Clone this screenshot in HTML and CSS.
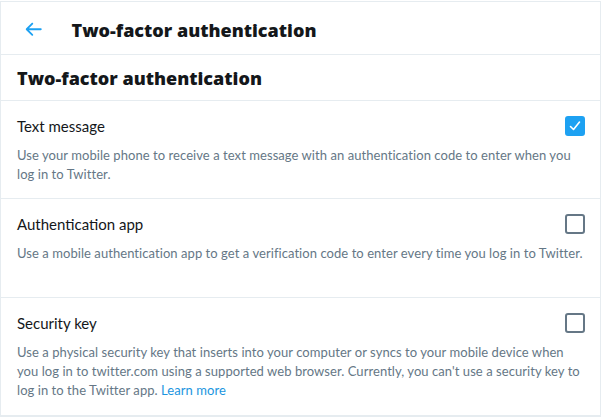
FILE: index.html
```html
<!DOCTYPE html>
<html>
<head>
<meta charset="utf-8">
<link rel="stylesheet" href="styles.css">
</head>
<body>
<div class="panel">
  <header class="topbar">
    <svg class="back" viewBox="0 0 24 24"><path d="M20 11H7.414l4.293-4.293c.39-.39.39-1.023 0-1.414s-1.023-.39-1.414 0l-6 6c-.39.39-.39 1.023 0 1.414l6 6c.195.195.45.293.707.293s.512-.098.707-.293c.39-.39.39-1.023 0-1.414L7.414 13H20c.553 0 1-.447 1-1s-.447-1-1-1z"/></svg>
    <h1 class="topbar-title">Two-factor authentication</h1>
  </header>
  <h2 class="section-title">Two-factor authentication</h2>
  <div class="option">
    <div class="option-head">
      <span class="option-label">Text message</span>
      <span class="check checked"><svg viewBox="0 0 20 20"><path d="M5.5 10.5l3 3 6-7.5"/></svg></span>
    </div>
    <p class="option-desc">Use your mobile phone to receive a text message with an authentication code to enter when you log in to Twitter.</p>
  </div>
  <div class="option tall">
    <div class="option-head">
      <span class="option-label">Authentication app</span>
      <span class="check"></span>
    </div>
    <p class="option-desc">Use a mobile authentication app to get a verification code to enter every time you log in to Twitter.</p>
  </div>
  <div class="option">
    <div class="option-head">
      <span class="option-label">Security key</span>
      <span class="check"></span>
    </div>
    <p class="option-desc">Use a physical security key that inserts into your computer or syncs to your mobile device when you log in to twitter.com using a supported web browser. Currently, you can't use a security key to log in to the Twitter app. <a class="link" href="#">Learn more</a></p>
  </div>
</div>
</body>
</html>
```

FILE: styles.css
```css
* { box-sizing: border-box; }
html, body { margin: 0; padding: 0; background: #fff; }
body { font-family: "Lato", "Open Sans", sans-serif; color: #14171a; }

.panel {
  margin-top: 1px;
  width: 601px;
  height: 416px;
  border: 1px solid #e6ecf0;
  border-bottom: 2px solid #e6ecf0;
}

.topbar {
  display: flex;
  align-items: center;
  height: 53px;
  padding-left: 21px;
  border-bottom: 1px solid #e6ecf0;
}
.back { width: 22.5px; height: 22.5px; fill: rgb(29,161,242); margin-top: 3px; }
.topbar-title {
  margin: 0 0 0 27px;
  font-family: "Open Sans", sans-serif;
  font-size: 18px;
  font-weight: 800;
  line-height: 24px;
  padding-top: 4px;
}

.section-title {
  margin: 0;
  padding: 11px 16px 10px;
  font-family: "Open Sans", sans-serif;
  font-size: 18px;
  font-weight: 800;
  line-height: 24px;
  border-bottom: 1px solid #e6ecf0;
}

.option {
  padding: 15px 15px 14px 16px;
  border-bottom: 1px solid #e6ecf0;
}
.option:last-child { border-bottom: none; }
.option.tall { min-height: 99px; }
.option-head {
  display: flex;
  justify-content: space-between;
  align-items: center;
  height: 20px;
}
.option-label { font-size: 15px; line-height: 20px; }
.check {
  width: 20px; height: 20px;
  border: 2px solid #657786;
  border-radius: 3px;
}
.check.checked {
  background: rgb(29,161,242);
  border-color: rgb(29,161,242);
  display: flex; align-items: center; justify-content: center;
}
.check svg { width: 20px; height: 20px; flex: none; fill: none; stroke: #fff; stroke-width: 1.6; stroke-linecap: round; stroke-linejoin: round; }
.option-desc {
  margin: 10px 0 0;
  font-size: 13px;
  letter-spacing: 0.06px;
  line-height: 19px;
  color: #657786;
}
.link { color: rgb(27,149,224); text-decoration: none; }
```
